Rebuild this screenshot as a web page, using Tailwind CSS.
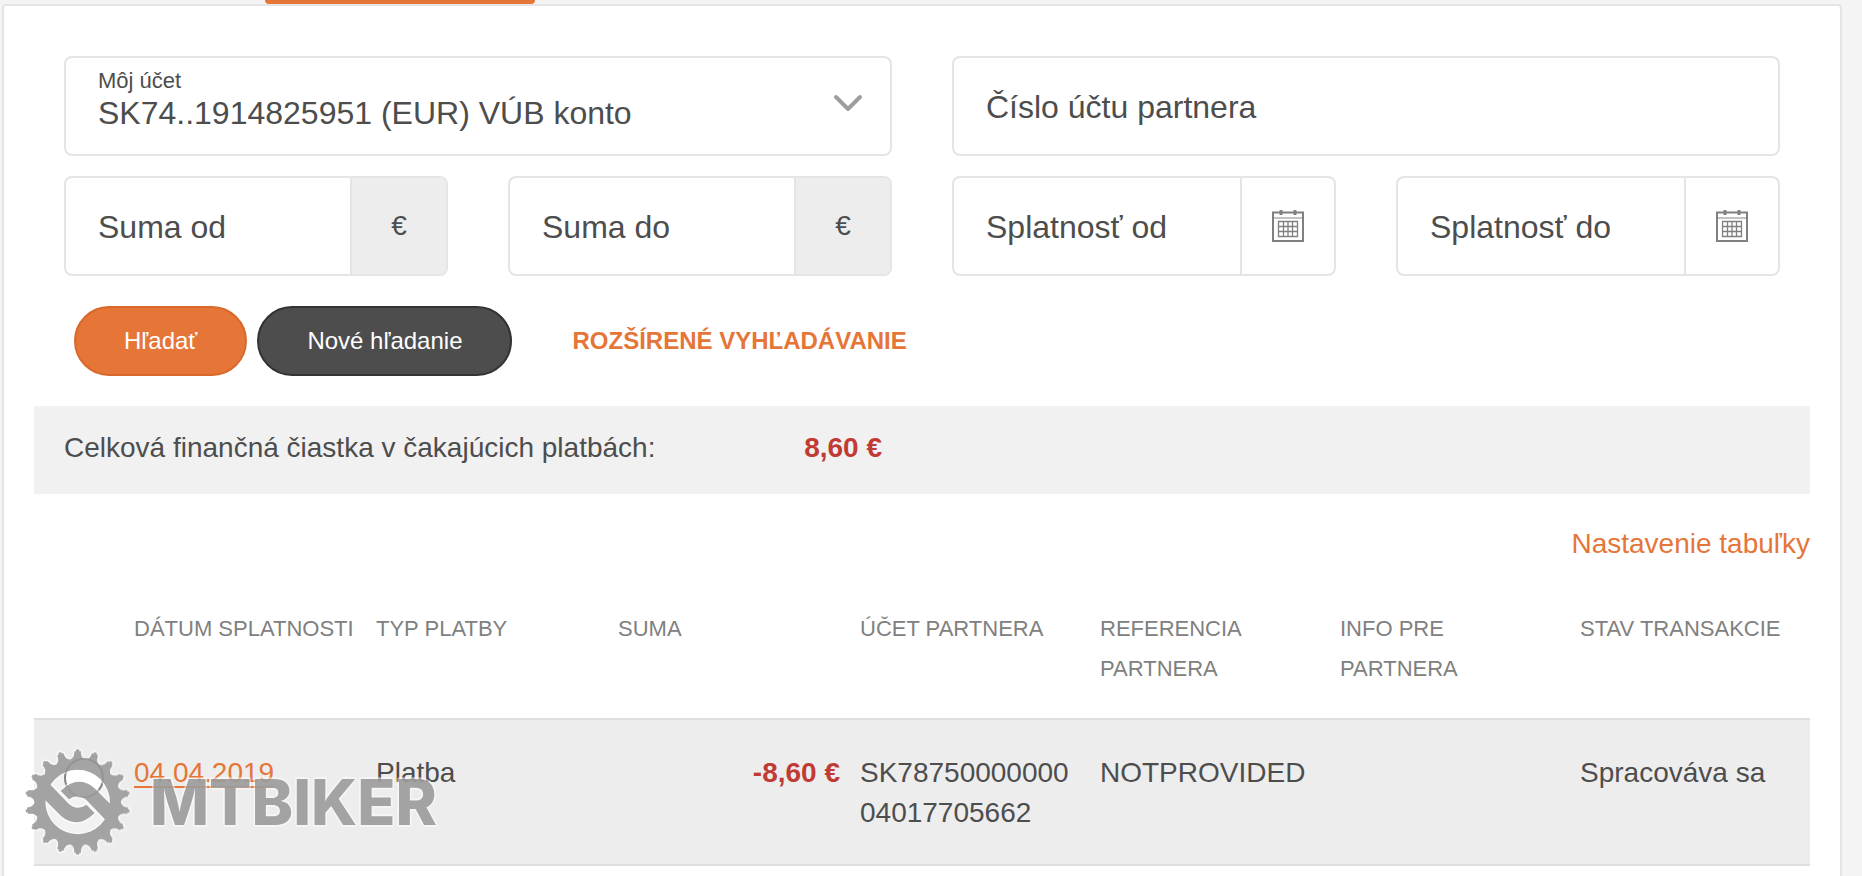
<!DOCTYPE html>
<html lang="sk">
<head>
  <meta charset="utf-8">
  <meta name="viewport" content="width=device-width, initial-scale=1">
  <title>Čakajúce platby</title>
  <script src="https://cdn.jsdelivr.net/npm/@tailwindcss/browser@4"></script>
</head>
<body class="relative flex min-h-screen flex-col overflow-x-hidden bg-[#f4f4f4] font-['Liberation_Sans',Arial,sans-serif] text-[28px] leading-[40px] text-[#4d4d4d]">

  <!-- Active tab -->
  <div class="h-1 pl-[265px]">
    <div class="h-1 w-[270px] rounded-b bg-[#e57638]"></div>
  </div>

  <main class="mr-5 ml-0.5 flex-1 rounded-t border-2 border-b-0 border-[#e5e5e5] bg-white px-[30px] pt-[50px]">

    <!-- Search form -->
    <form class="px-[30px]">
      <div class="grid grid-cols-4 gap-x-[60px] gap-y-5 text-[32px]">

        <div class="relative col-span-2 h-[100px] rounded-lg border-2 border-[#e5e5e5]">
          <label for="account" class="absolute top-[10px] left-8 text-[22px] leading-[26px]">Môj účet</label>
          <select id="account" class="h-full w-full appearance-none rounded-lg bg-transparent pt-[14px] pr-20 pl-8 focus:outline-none">
            <option>SK74..1914825951 (EUR) VÚB konto</option>
          </select>
          <svg class="pointer-events-none absolute top-9 right-[26px] h-5 w-8" viewBox="0 0 32 20" fill="none" stroke="#9e9e9e" stroke-width="4" stroke-linecap="round" stroke-linejoin="round">
            <path d="M4 3l12 12L28 3"/>
          </svg>
        </div>

        <div class="relative col-span-2 h-[100px] rounded-lg border-2 border-[#e5e5e5]">
          <input id="partner" type="text" placeholder=" " class="peer h-full w-full rounded-lg px-8 focus:outline-none">
          <label for="partner" class="pointer-events-none absolute inset-y-0 left-8 flex items-center pt-0.5 peer-[:not(:placeholder-shown)]:hidden">Číslo účtu partnera</label>
        </div>

        <div class="relative flex h-[100px] overflow-hidden rounded-lg border-2 border-[#e5e5e5]">
          <input id="sumFrom" type="text" placeholder=" " class="peer min-w-0 flex-1 pl-8 focus:outline-none">
          <label for="sumFrom" class="pointer-events-none absolute inset-y-0 left-8 flex items-center pt-0.5 peer-[:not(:placeholder-shown)]:hidden">Suma od</label>
          <span class="flex w-24 items-center justify-center border-l-2 border-[#e5e5e5] bg-[#ededed] text-[28px]">€</span>
        </div>

        <div class="relative flex h-[100px] overflow-hidden rounded-lg border-2 border-[#e5e5e5]">
          <input id="sumTo" type="text" placeholder=" " class="peer min-w-0 flex-1 pl-8 focus:outline-none">
          <label for="sumTo" class="pointer-events-none absolute inset-y-0 left-8 flex items-center pt-0.5 peer-[:not(:placeholder-shown)]:hidden">Suma do</label>
          <span class="flex w-24 items-center justify-center border-l-2 border-[#e5e5e5] bg-[#ededed] text-[28px]">€</span>
        </div>

        <div class="relative flex h-[100px] rounded-lg border-2 border-[#e5e5e5]">
          <input id="dueFrom" type="text" placeholder=" " class="peer min-w-0 flex-1 rounded-lg pl-8 focus:outline-none">
          <label for="dueFrom" class="pointer-events-none absolute inset-y-0 left-8 flex items-center pt-0.5 peer-[:not(:placeholder-shown)]:hidden">Splatnosť od</label>
          <button type="button" aria-label="Vybrať dátum od" class="flex w-[94px] items-center justify-center border-l-2 border-[#e5e5e5]">
            <svg class="h-[34px] w-8" viewBox="0 0 32 34" fill="none" stroke="#808080">
              <path d="M1 3.5h30v28.500H1z" stroke-width="2"/>
              <path d="M2 9h28" stroke="#c2c2c2" stroke-width="2"/>
              <path d="M9 1v5M23 1v5" stroke-width="3"/>
              <path d="M6.500 12.500h19v15h-19zM11.500 12.500v15M16 12.500v15M20.500 12.500v15M6.500 17.500h19M6.500 22.500h19" stroke-width="1.300"/>
            </svg>
          </button>
        </div>

        <div class="relative flex h-[100px] rounded-lg border-2 border-[#e5e5e5]">
          <input id="dueTo" type="text" placeholder=" " class="peer min-w-0 flex-1 rounded-lg pl-8 focus:outline-none">
          <label for="dueTo" class="pointer-events-none absolute inset-y-0 left-8 flex items-center pt-0.5 peer-[:not(:placeholder-shown)]:hidden">Splatnosť do</label>
          <button type="button" aria-label="Vybrať dátum do" class="flex w-[94px] items-center justify-center border-l-2 border-[#e5e5e5]">
            <svg class="h-[34px] w-8" viewBox="0 0 32 34" fill="none" stroke="#808080">
              <path d="M1 3.5h30v28.500H1z" stroke-width="2"/>
              <path d="M2 9h28" stroke="#c2c2c2" stroke-width="2"/>
              <path d="M9 1v5M23 1v5" stroke-width="3"/>
              <path d="M6.500 12.500h19v15h-19zM11.500 12.500v15M16 12.500v15M20.500 12.500v15M6.500 17.500h19M6.500 22.500h19" stroke-width="1.300"/>
            </svg>
          </button>
        </div>
      </div>

      <div class="mt-[30px] flex items-center pl-[10px] text-[24px]">
        <button type="submit" class="h-[70px] rounded-full border-2 border-[#d9682b] bg-[#e57638] px-12 text-white">Hľadať</button>
        <button type="reset" class="ml-[10px] h-[70px] rounded-full border-2 border-[#333333] bg-[#4d4d4d] px-12 text-white">Nové hľadanie</button>
        <a href="#" class="ml-[60px] font-bold text-[#e57638]">ROZŠÍRENÉ VYHĽADÁVANIE</a>
      </div>
    </form>

    <!-- Total -->
    <section class="mt-[30px] grid grid-cols-2 gap-x-[60px] bg-[#f1f1f1] px-[30px] pt-[22px] pb-[26px]">
      <div class="flex justify-between pr-[10px]">
        <span>Celková finančná čiastka v čakajúcich platbách:</span>
        <strong class="text-[#c13b35]">8,60 €</strong>
      </div>
    </section>

    <div class="mt-[30px] text-right">
      <a href="#" class="text-[#e57638]">Nastavenie tabuľky</a>
    </div>

    <!-- Payments -->
    <table class="w-full table-fixed border-separate border-spacing-0 text-left">
      <thead class="text-[22px] text-[#808080]">
        <tr class="align-top">
          <th class="w-[90px] pt-[45px] pb-[29px]"></th>
          <th class="w-[242px] px-[10px] pt-[45px] pb-[29px] font-normal whitespace-nowrap">DÁTUM SPLATNOSTI</th>
          <th class="w-[242px] px-[10px] pt-[45px] pb-[29px] font-normal">TYP PLATBY</th>
          <th class="w-[242px] px-[10px] pt-[45px] pb-[29px] font-normal">SUMA</th>
          <th class="px-[10px] pt-[45px] pb-[29px] font-normal">ÚČET PARTNERA</th>
          <th class="px-[10px] pt-[45px] pb-[29px] font-normal">REFERENCIA PARTNERA</th>
          <th class="px-[10px] pt-[45px] pb-[29px] font-normal">INFO PRE<br>PARTNERA</th>
          <th class="px-[10px] pt-[45px] pb-[29px] font-normal whitespace-nowrap">STAV TRANSAKCIE</th>
        </tr>
      </thead>
      <tbody>
        <tr class="bg-[#ededed] align-top">
          <td class="border-y-2 border-[#dfdfdf] pt-[38px] pl-[30px]">
            <input type="radio" name="payment" aria-label="Vybrať platbu 04.04.2019" class="block h-10 w-10 appearance-none rounded-full border-2 border-[#4d4d4d] bg-white">
          </td>
          <td class="border-y-2 border-[#dfdfdf] px-[10px] pt-[33px] pb-[31px]"><a href="#" class="text-[#e57638] underline decoration-2 underline-offset-4">04.04.2019</a></td>
          <td class="border-y-2 border-[#dfdfdf] px-[10px] pt-[33px] pb-[31px]">Platba</td>
          <td class="border-y-2 border-[#dfdfdf] px-[10px] pt-[33px] pb-[31px] text-right font-bold text-[#c13b35]">-8,60 €</td>
          <td class="border-y-2 border-[#dfdfdf] px-[10px] pt-[33px] pb-[31px] break-all">SK7875000000004017705662</td>
          <td class="border-y-2 border-[#dfdfdf] px-[10px] pt-[33px] pb-[31px]">NOTPROVIDED</td>
          <td class="border-y-2 border-[#dfdfdf] px-[10px] pt-[33px] pb-[31px]"></td>
          <td class="border-y-2 border-[#dfdfdf] px-[10px] pt-[33px] pb-[31px]">Spracováva sa</td>
        </tr>
      </tbody>
    </table>
  </main>

  <!-- Watermark -->
  <svg class="pointer-events-none absolute top-[743px] left-[18px] h-[120px] w-[460px]" viewBox="0 0 1380 360">
    <defs>
      <path id="tooth" d="M-23-124L-21-128C-13-132-9-140-10-152L-5-153-4-158H4L5-153 10-152C9-140 13-132 21-128L23-124Z"/>
      <g id="teeth">
        <use href="#tooth"/>
        <use href="#tooth" transform="rotate(20)"/>
        <use href="#tooth" transform="rotate(40)"/>
      </g>
      <path id="band" d="M-90-62L-81-51L-27 5Q-1 28 26 8L51 33Q1 83-49 43L-94-2L-104-8Z"/>
      <g id="gear" transform="translate(179 177)">
        <use href="#teeth"/>
        <use href="#teeth" transform="rotate(60)"/>
        <use href="#teeth" transform="rotate(120)"/>
        <use href="#teeth" transform="rotate(180)"/>
        <use href="#teeth" transform="rotate(240)"/>
        <use href="#teeth" transform="rotate(300)"/>
        <path fill-rule="evenodd" d="M0-129A129 129 0 0 1 0 129A129 129 0 0 1 0-129ZM0-97A97 97 0 0 0 0 97A97 97 0 0 0 0-97Z"/>
        <use href="#band"/>
        <use href="#band" transform="rotate(180)"/>
      </g>
      <text id="brand" x="396" y="247" class="font-['Inter',sans-serif] text-[188px] font-extrabold">MTBIKER</text>
    </defs>
    <g fill="#fff" stroke="#fff" stroke-width="10" stroke-linejoin="round" opacity=".5">
      <use href="#gear"/>
      <use href="#brand"/>
    </g>
    <circle cx="179" cy="177" r="97" fill="#fff" opacity=".3"/>
    <g fill="#909090" opacity=".82">
      <use href="#gear"/>
      <use href="#brand"/>
    </g>
  </svg>
</body>
</html>
